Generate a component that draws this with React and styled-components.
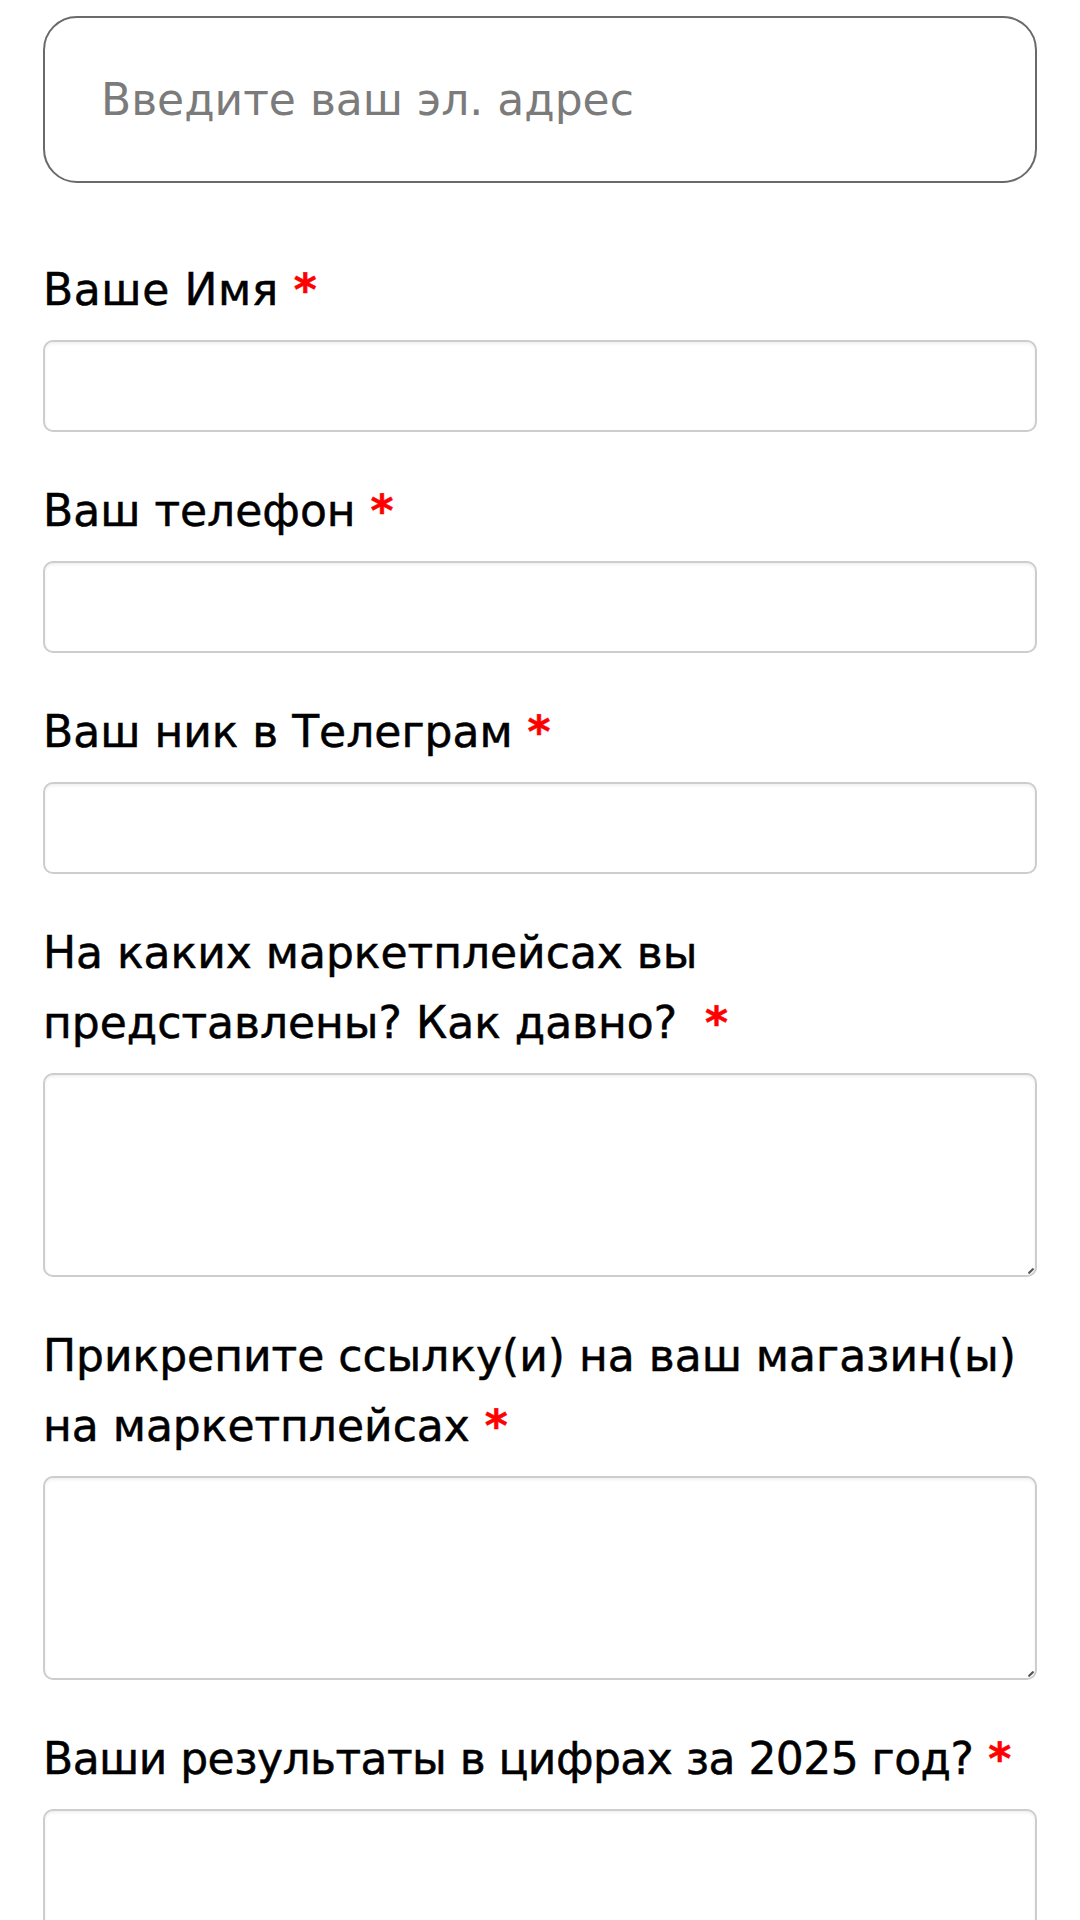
import styled, { createGlobalStyle } from "styled-components"

const GlobalStyle = createGlobalStyle`
    body {
        margin: 0;
        background-color: #ffffff;
        font-family: "DejaVu Sans", "Noto Sans", sans-serif;
    }
`

const fields = [
    { label: ["Ваше Имя"], kind: "input", spacing: 0.6 },
    { label: ["Ваш телефон"], kind: "input" },
    { label: ["Ваш ник в Телеграм"], kind: "input" },
    { label: ["На каких маркетплейсах вы", "представлены? Как давно?"], kind: "area", wide: true },
    { label: ["Прикрепите ссылку(и) на ваш магазин(ы)", "на маркетплейсах"], kind: "area" },
    { label: ["Ваши результаты в цифрах за 2025 год?"], kind: "area", spacing: -0.55 },
]

export default function App() {
    return (
        <>
            <GlobalStyle />
            <Form>
                <EmailInput type="email" placeholder="Введите ваш эл. адрес" />

                {fields.map((f, i) => (
                    <Field key={i}>
                        <Label spacing={f.spacing}>
                            {f.label.map((line, j) => (
                                <Line key={j}>
                                    {line}
                                    {j === f.label.length - 1 && <Star wide={f.wide}>*</Star>}
                                </Line>
                            ))}
                        </Label>
                        {f.kind === "input" ? (
                            <TextInput type="text" />
                        ) : (
                            <AreaWrap>
                                <TextArea />
                                <Grip viewBox="0 0 6 6">
                                    <path d="M1.2 4.8 L4.8 1.2" stroke="#555" strokeWidth="2.2" strokeLinecap="round" />
                                </Grip>
                            </AreaWrap>
                        )}
                    </Field>
                ))}
            </Form>
        </>
    )
}

const Form = styled.form`
    display: flex;
    flex-direction: column;
    gap: 44px;

    padding: 16px 43px 0;
`
const EmailInput = styled.input`
    box-sizing: border-box;
    width: 100%;
    height: 167px;
    margin-bottom: 28px;
    padding: 0 56px;

    border: 2px solid #6a6a6a;
    border-radius: 34px;
    outline: none;

    font-family: "DejaVu Sans", sans-serif;
    font-size: 44px;
    color: #222;

    &::placeholder {
        color: #7b7b7b;
    }
`
const Field = styled.div`
    display: flex;
    flex-direction: column;
    gap: 15px;
`
const Label = styled.label`
    display: flex;
    flex-direction: column;

    font-size: 44px;
    line-height: 70px;
    letter-spacing: ${props => (props.spacing) ? props.spacing + "px" : "normal"};
    color: #000;
    -webkit-text-stroke: 0.5px #000;
`
const Line = styled.span`
    white-space: nowrap;
`
const Star = styled.span`
    color: #ff0000;
    -webkit-text-stroke: 0.5px #ff0000;
    font-weight: 700;
    letter-spacing: normal;
    margin-left: ${props => (props.wide) ? "28px" : "15px"};
`
const TextInput = styled.input`
    box-sizing: border-box;
    width: 100%;
    height: 92px;

    border: 2px solid #cdcdcd;
    border-radius: 10px;
    box-shadow: inset 0 2px 3px rgba(0, 0, 0, 0.06);
    outline: none;
    background: #fff;
`
const AreaWrap = styled.div`
    position: relative;
    display: flex;
`
const TextArea = styled.textarea`
    box-sizing: border-box;
    width: 100%;
    height: 204px;
    resize: none;

    border: 2px solid #cdcdcd;
    border-radius: 10px;
    box-shadow: inset 0 2px 3px rgba(0, 0, 0, 0.06);
    outline: none;
    background: #fff;
`
const Grip = styled.svg`
    position: absolute;
    right: 3px;
    bottom: 3px;
    width: 6px;
    height: 6px;
`
